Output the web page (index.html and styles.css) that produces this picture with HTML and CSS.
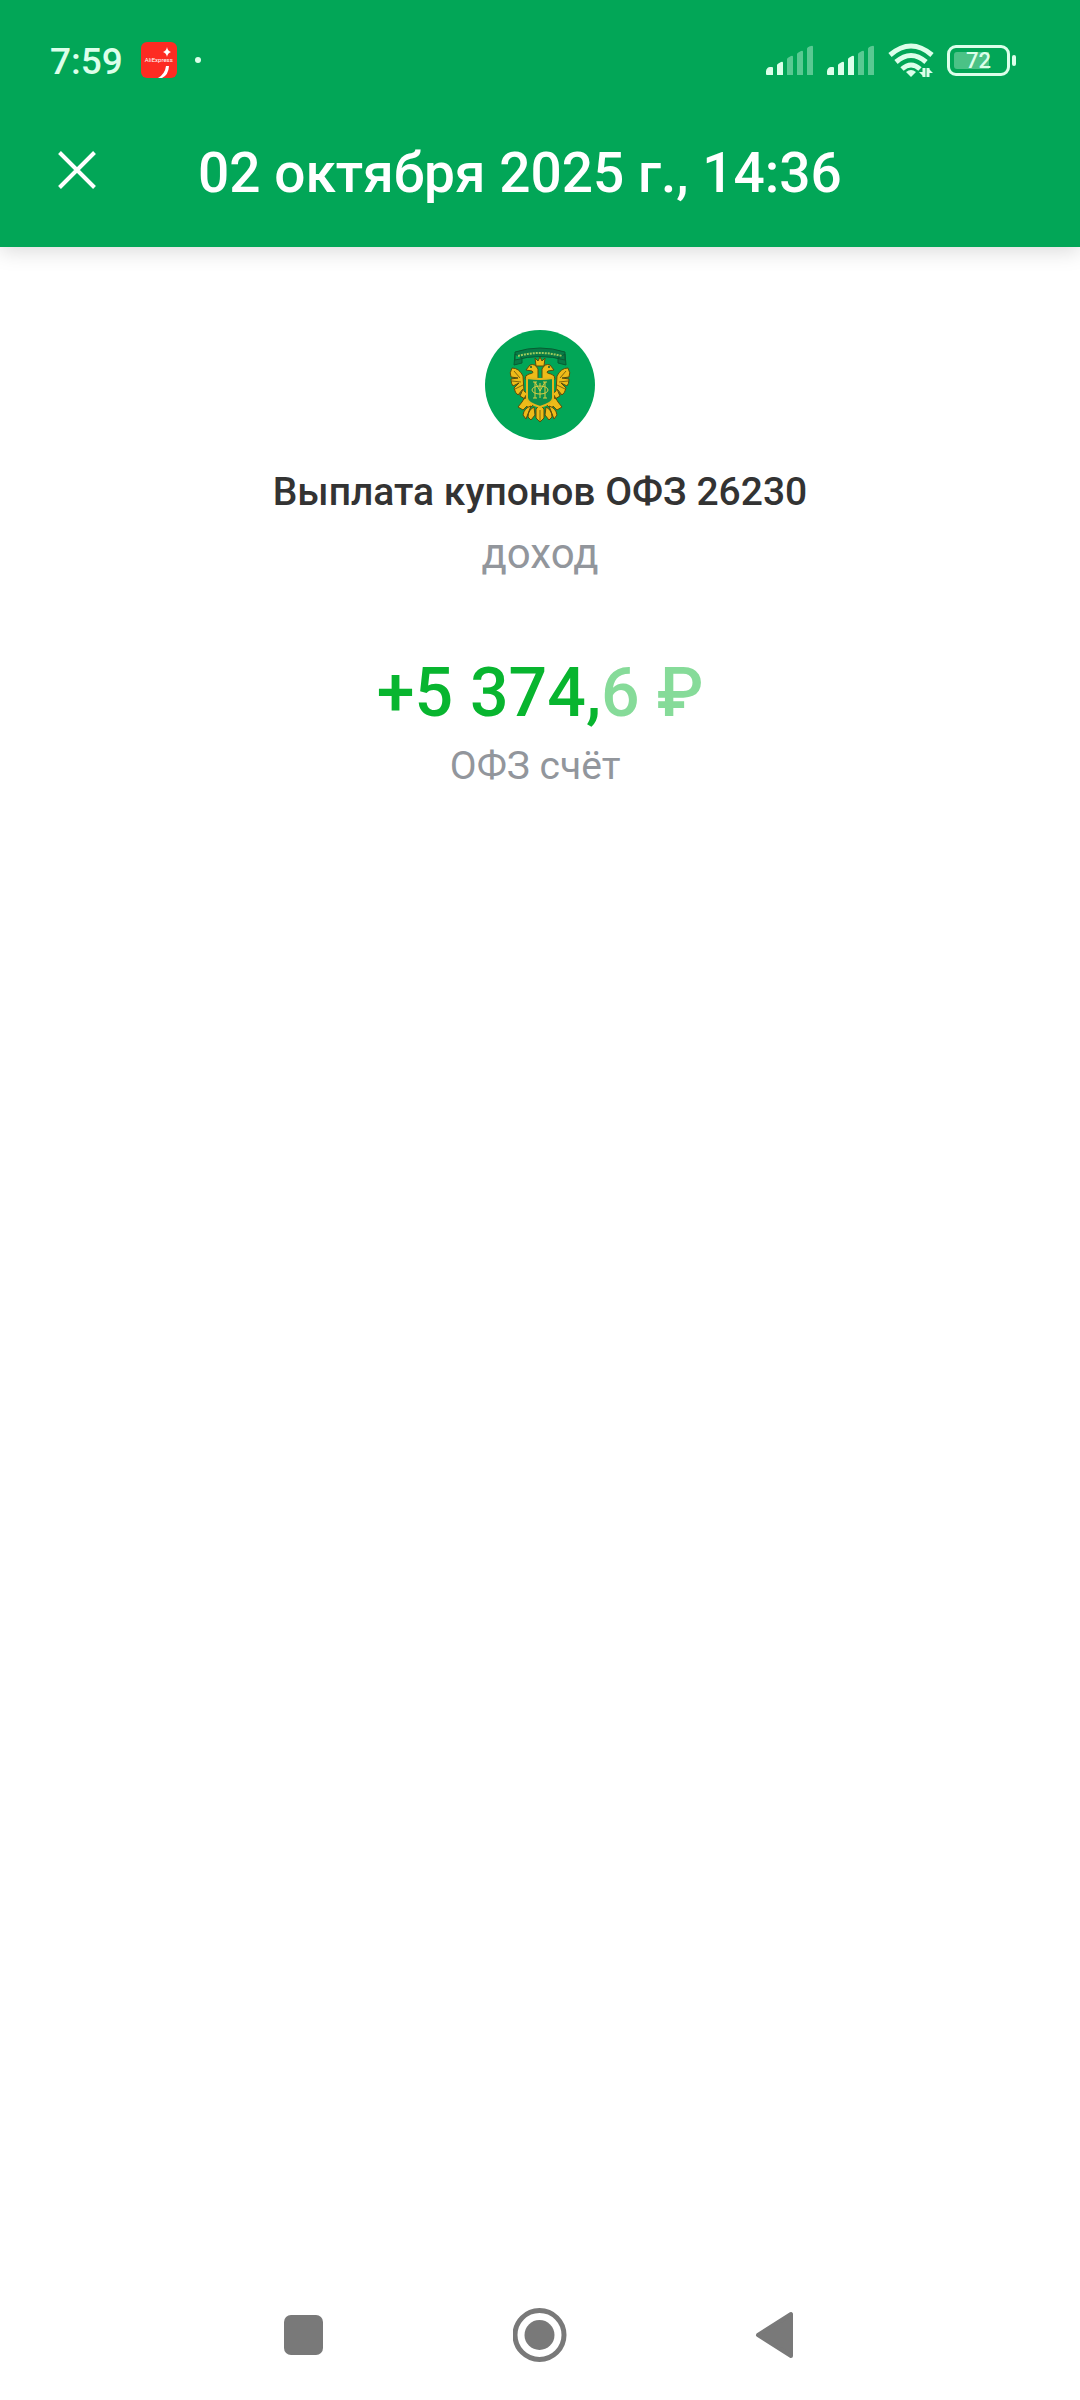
FILE: index.html
```html
<!DOCTYPE html>
<html lang="ru">
  <head>
    <meta charset="UTF-8" />
    <meta name="viewport" content="width=device-width, initial-scale=1.0" />
    <link rel="stylesheet" href="styles.css">
    <title>Выплата купонов</title>
  </head>

  <body>
    <header class="header">
      <div class="statusBar">
        <span class="time">7:59</span>
        <span class="appIcon">
          <svg width="36" height="36" viewBox="0 0 36 36">
            <rect width="36" height="36" rx="6" fill="#fd2b22" />
            <path d="M26 5q.6 4 4 5-3.400 1-4 5-.6-4-4-5 3.400-1 4-5z" fill="#fff" />
            <path d="M25 24h3q-.5 9-7 12h-4q7-4 8-12z" fill="#fff" />
          </svg>
          <span class="appName">AliExpress</span>
        </span>
        <span class="dot"></span>

        <div class="statusIcons">
          <svg width="48" height="30" viewBox="0 0 48 30" fill="#dcffea">
            <path d="M0 26q1-4 4-4h2q1 0 1 1v7H1q-1 0-1-1z" />
            <path d="M11 20q0-1 4-3 2-1 2 1v12h-6z" />
            <path opacity=".4" d="M21 14q0-1 4-3 2-1 2 1v18h-6zM31 9q0-1 4-3 2-1 2 1v23h-6zM41 4q0-2 4-3 2-1 2 1v28h-6z" />
          </svg>
          <svg width="48" height="30" viewBox="0 0 48 30" fill="#dcffea">
            <path d="M0 26q1-4 4-4h2q1 0 1 1v7H1q-1 0-1-1z" />
            <path d="M11 20q0-1 4-3 2-1 2 1v12h-6zM21 14q0-1 4-3 2-1 2 1v18h-6z" />
            <path opacity=".4" d="M31 9q0-1 4-3 2-1 2 1v23h-6zM41 4q0-2 4-3 2-1 2 1v28h-6z" />
          </svg>
          <svg width="46" height="35" viewBox="0 0 46 35" fill="none" stroke="#dcffea" stroke-width="5">
            <path d="M2 12Q23-6 44 12M8 19Q23 6 38 19M14 26q9-8 18 0" />
            <path d="M23 34l-5-5q5-4 10 0z" fill="#dcffea" stroke="none" />
            <path d="M36 25v9M40 34v-9" stroke-width="3" />
            <path d="M36 34l-5-5h5zM40 25l5 5h-5z" fill="#dcffea" stroke="none" />
          </svg>
          <div class="battery">
            <span class="batteryLevel">72</span>
          </div>
        </div>
      </div>

      <div class="toolbar">
        <button class="closeButton" aria-label="Закрыть">
          <svg width="38" height="38" viewBox="0 0 38 38" stroke="#fff" stroke-width="4">
            <path d="M1.500 1.500l35 35M36.500 1.500l-35 35" />
          </svg>
        </button>
        <h1 class="title">02 октября 2025 г., 14:36</h1>
      </div>
    </header>

    <main class="operation">
      <svg width="110" height="110" viewBox="10 10 110 110">
        <circle cx="65" cy="65" r="55" fill="#02a657" />
        <!-- ribbon -->
        <path d="M40 32q25-8 50 0v8q-25-7-50 0zM40 34l-1 11 8-2v-5zM90 34l1 11-8-2v-5z" fill="#087b46" stroke="#085c32" stroke-width="1" />
        <path d="M43 36q22-6 44 0" fill="none" stroke="#9dcb5c" stroke-width="2" stroke-dasharray="2 1" />
        <!-- wings -->
        <g fill="#eebb19" stroke="#5b4b0b" stroke-width="1">
          <path d="M48 56q-4-8-11-8-3 5-1 9l7 1-7 1q0 5 2 7l6-3-5 5q1 5 4 7l5-6-3 7 5 3 3-7-6 10-4 5 5 3 4-4 1 4 5-5v-7l-9-7z" />
          <path d="M82 56q4-8 11-8 3 5 1 9l-7 1 7 1q0 5-2 7l-6-3 5 5q-1 5-4 7l-5-6 3 7-5 3-3-7 6 10 4 5-5 3-4-4-1 4-5-5v-7l9-7z" />
          <!-- heads -->
          <path d="M63 59V49q-3-6-8-4l-4 5 6 1q3 2-3 3-4 1-4 5zM67 59V49q3-6 8-4l4 5-6 1q-3 2 3 3 4 1 4 5z" />
          <path d="M60 38l3 3 2-4 2 4 3-3-1 8h-8z" />
          <!-- tail -->
          <path d="M61 89l4-4 4 4v9l-4 4-4-4zM59 87q-6 3-6 10l3 3 4-5zM71 87q6 3 6 10l-3 3-4-5zM56 86q-7 2-8 9l3 4zM74 86q7 2 8 9l-3 4z" />
        </g>
        <circle cx="56" cy="47" r="1" fill="#085c32" />
        <circle cx="74" cy="47" r="1" fill="#085c32" />
        <!-- shield -->
        <path d="M52 58q13 2 26 0v20q0 5-13 9-13-4-13-9z" fill="#0b8f4c" stroke="#e4b51c" stroke-width="2" />
        <path d="M60 62v16M70 62v16M65 63v15M58 62h4M68 62h4M58 78h4M68 78h4M60 62l5 9 5-9" fill="none" stroke="#d9ce43" stroke-width="1" />
        <ellipse cx="65" cy="70" rx="8" ry="4" fill="none" stroke="#d9ce43" stroke-width="1" />
        <path d="M39 51l6 7M37 61l9 1M40 69l8-4M44 75l5-7M91 51l-6 7M93 61l-9 1M90 69l-8-4M86 75l-5-7M65 90v11" stroke="#80680e" stroke-width="1" />
      </svg>

      <h2 class="name">Выплата купонов ОФЗ 26230</h2>
      <p class="caption">доход</p>
      <p class="amount">+5 374,<span class="cents">6 ₽</span></p>
      <p class="account">ОФЗ счёт&nbsp;</p>
    </main>

    <nav class="navBar">
      <button class="navButton" aria-label="Недавние">
        <svg width="54" height="54" viewBox="0 0 54 54" fill="#797979">
          <rect x="7" y="7" width="39" height="40" rx="7" />
        </svg>
      </button>
      <button class="navButton" aria-label="Домой">
        <svg width="54" height="54" viewBox="0 0 54 54" fill="#797979">
          <circle cx="26.500" cy="27" r="24.500" fill="none" stroke="#797979" stroke-width="5" />
          <circle cx="26.500" cy="27" r="15" />
        </svg>
      </button>
      <button class="navButton" aria-label="Назад">
        <svg width="54" height="54" viewBox="0 0 54 54" fill="#797979" stroke="#797979" stroke-width="4" stroke-linejoin="round">
          <path d="M9 27L42 6v42z" />
        </svg>
      </button>
    </nav>
  </body>
</html>
```
FILE: styles.css
```css
body {
  display: flex;
  flex-direction: column;
  min-height: 100vh;
  margin: 0px;
  background-color: #fff;
  font-family: Roboto, "Liberation Sans", sans-serif;
}
h1, h2, p {
  margin: 0px;
}
svg {
  display: block;
}
button {
  padding: 0px;
  border: none;
  background: none;
  cursor: pointer;
}

.header {
  background-color: #02a657;
  box-shadow: 0px 4px 20px rgba(0, 0, 0, 0.15);
  color: #fff;
}
.statusBar {
  display: flex;
  align-items: center;
  height: 120px;
  padding: 0px 70px 0px 50px;
  color: #dcffea;
}
.time {
  padding-top: 4px;
  font-size: 37px;
  font-weight: 500;
  line-height: 40px;
}
.appIcon {
  position: relative;
  margin: 0px 18px;
}
.appName {
  position: absolute;
  top: 14px;
  left: 0px;
  width: 100%;
  color: #fff;
  font-size: 6px;
  line-height: 8px;
  text-align: center;
}
.dot {
  width: 6px;
  height: 6px;
  border-radius: 50%;
  background-color: #dcffea;
}
.statusIcons {
  display: flex;
  align-items: center;
  gap: 13px;
  margin-left: auto;
}
.battery {
  position: relative;
  box-sizing: border-box;
  width: 63px;
  height: 31px;
  padding: 4px;
  border: 3px solid #dcffea;
  border-radius: 9px;
}
.battery::after {
  content: "";
  position: absolute;
  top: 7px;
  right: -9px;
  width: 4px;
  height: 11px;
  border-radius: 2px;
  background-color: #dcffea;
}
.batteryLevel {
  display: block;
  height: 17px;
  border-radius: 3px;
  background: linear-gradient(to right, #4bc286 72%, transparent 72%);
  font-size: 22px;
  font-weight: 500;
  line-height: 18px;
  text-align: center;
}

.toolbar {
  display: flex;
  align-items: center;
  gap: 102px;
  padding: 20px 58px 41px;
}
.closeButton {
  padding-bottom: 6px;
}
.title {
  font-size: 55px;
  font-weight: 500;
  line-height: 66px;
}

.operation {
  display: flex;
  flex: 1;
  flex-direction: column;
  align-items: center;
  padding-top: 83px;
  text-align: center;
}
.name {
  margin-top: 28px;
  color: #333;
  font-size: 39px;
  font-weight: 500;
  line-height: 48px;
}
.caption, .account {
  color: #92969c;
  line-height: 48px;
}
.caption {
  margin-top: 14px;
  font-size: 42px;
}
.amount {
  margin-top: 76px;
  color: #08b52f;
  font-size: 68px;
  font-weight: 500;
  line-height: 78px;
}
.cents {
  color: #86db99;
}
.account {
  margin-top: 10px;
  font-size: 39px;
}

.navBar {
  display: flex;
  justify-content: center;
  padding: 38px 0px;
}
.navButton {
  display: flex;
  justify-content: center;
  width: 236px;
}
```
